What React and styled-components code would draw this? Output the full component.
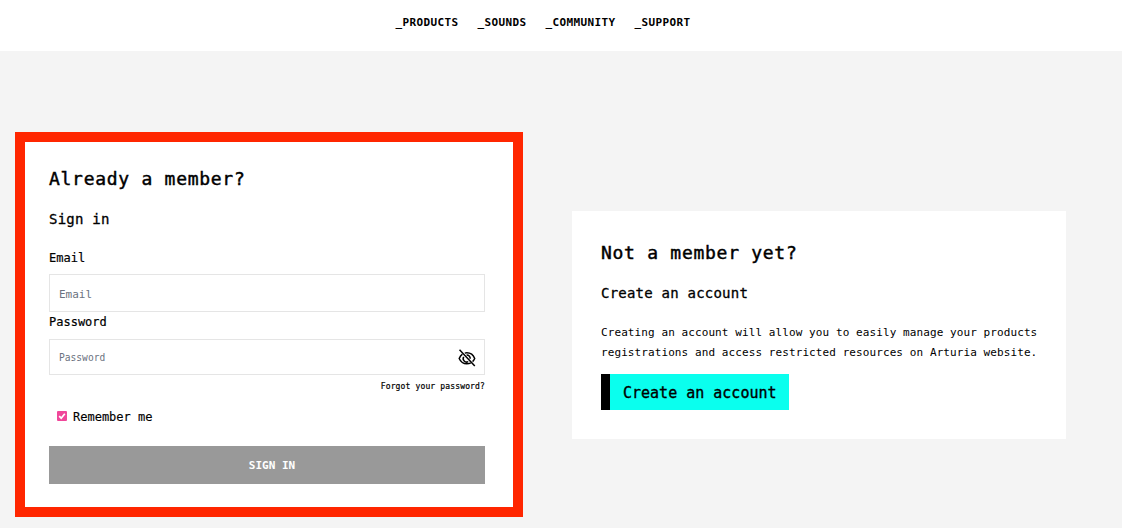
import React from 'react';
import styled, { createGlobalStyle } from 'styled-components';

const mono = `"DejaVu Sans Mono", "Liberation Mono", monospace`;

const GlobalStyle = createGlobalStyle`
  html, body {
    margin: 0;
    padding: 0;
    height: 100%;
    overflow: hidden;
    background: #f4f4f4;
  }
  * {
    box-sizing: border-box;
  }
`;

const Nav = styled.nav`
  height: 51px;
  background: #fff;
  display: flex;
  justify-content: center;
  align-items: center;
  gap: 19px;
  padding: 0 36px 7px 0;
`;

const NavLink = styled.a`
  font-family: ${mono};
  font-size: 11px;
  font-weight: 700;
  letter-spacing: 0.38px;
  color: #000;
  white-space: nowrap;
`;

const Main = styled.main`
  display: flex;
  align-items: center;
  padding: 81px 0 0 15px;
  gap: 49px;
`;

const LoginCard = styled.section`
  width: 508px;
  height: 385px;
  background: #fff;
  border: 10px solid #ff2600;
  padding: 25px 28px 0 24px;
  display: flex;
  flex-direction: column;
`;

const SignupCard = styled.section`
  width: 494px;
  height: 228px;
  background: #fff;
  padding: 30px 28px 0 29px;
  display: flex;
  flex-direction: column;
`;

const Title = styled.h2`
  margin: 0;
  font-family: ${mono};
  font-size: 18px;
  font-weight: 400;
  -webkit-text-stroke: 0.45px #000;
  letter-spacing: 0.72px;
  line-height: 24px;
  color: #000;
`;

const Subtitle = styled.h3`
  margin: 19px 0 0;
  font-family: ${mono};
  font-size: 14px;
  font-weight: 400;
  -webkit-text-stroke: 0.3px #000;
  letter-spacing: 0.22px;
  line-height: 18px;
  color: #000;
`;

const Label = styled.label`
  display: block;
  font-family: ${mono};
  font-size: 12px;
  -webkit-text-stroke: 0.2px #000;
  line-height: 16px;
  color: #000;
  margin-top: ${(p) => p.$top || 0}px;
  margin-bottom: ${(p) => p.$bottom || 0}px;
`;

const InputWrap = styled.div`
  position: relative;
  width: 436px;
`;

const Input = styled.input`
  display: block;
  width: 100%;
  height: ${(p) => p.$height}px;
  padding: ${(p) => p.$pad || 0}px 9px 0;
  border: 1px solid #e5e5e5;
  border-radius: 0;
  outline: none;
  background: #fff;
  font-family: ${mono};
  font-size: ${(p) => p.$size}px;
  color: #000;

  &::placeholder {
    color: #6b7280;
    opacity: 1;
  }
`;

const EyeButton = styled.span`
  position: absolute;
  right: 9px;
  top: 10px;
  width: 18px;
  height: 18px;
  display: flex;
`;

const ForgotRow = styled.div`
  width: 436px;
  margin-top: 6px;
  text-align: right;
  font-family: ${mono};
  font-size: 8px;
  -webkit-text-stroke: 0.2px #000;
  letter-spacing: 0.15px;
  line-height: 11px;
  color: #000;
`;

const RememberRow = styled.label`
  display: flex;
  align-items: center;
  gap: 6px;
  margin: 17px 0 0 8px;
  font-family: ${mono};
  font-size: 12px;
  -webkit-text-stroke: 0.15px #000;
  line-height: 16px;
  color: #000;
`;

const CheckBox = styled.span`
  width: 10px;
  height: 10px;
  border-radius: 1px;
  background: #f0479a;
  display: flex;
  margin-top: -2px;
`;

const SubmitButton = styled.button`
  width: 436px;
  height: 38px;
  margin-top: 21px;
  padding: 0 0 0 10px;
  border: none;
  background: #999;
  color: #fff;
  font-family: ${mono};
  font-size: 11px;
  font-weight: 700;
`;

const Paragraph = styled.p`
  margin: 21px 0 0;
  font-family: ${mono};
  font-size: 11px;
  letter-spacing: 0.09px;
  line-height: 20px;
  color: #000;
  white-space: nowrap;
`;

const CreateButton = styled.a`
  display: block;
  width: 188px;
  height: 36px;
  margin-top: 11px;
  padding-left: 13px;
  background: #0affee;
  border-left: 9px solid #000;
  font-family: ${mono};
  font-size: 15px;
  -webkit-text-stroke: 0.35px #000;
  line-height: 38px;
  color: #000;
  white-space: nowrap;
`;

const EyeOffIcon = () => (
  <svg width="18" height="18" viewBox="0 0 18 18" fill="none" stroke="#000" strokeWidth="1.5">
    <path d="M1.500 0.800 16.800 17" />
    <path d="M4.400 5.200C3 6.200 1.900 7.700 1.200 9.500c1.500 3.400 4.200 5.300 7.600 5.300 1.500 0 2.800-.3 4-1" />
    <path d="M6.800 4.100c.7-.2 1.300-.3 2-.3 3.600 0 6.500 2 7.900 5.700-.5 1.300-1.200 2.300-2.100 3.100" />
    <path d="M5.700 7.900a3.400 3.400 0 0 0 4.600 4.700" />
    <path d="M8.600 6.100a3.400 3.400 0 0 1 3.600 3.600" />
  </svg>
);

const App = () => (
  <>
    <GlobalStyle />
    <Nav>
      <NavLink>_PRODUCTS</NavLink>
      <NavLink>_SOUNDS</NavLink>
      <NavLink>_COMMUNITY</NavLink>
      <NavLink>_SUPPORT</NavLink>
    </Nav>
    <Main>
      <LoginCard>
        <Title>Already a member?</Title>
        <Subtitle>Sign in</Subtitle>
        <Label $top={22} $bottom={8}>Email</Label>
        <InputWrap>
          <Input $height={38} $size={11} $pad={2} placeholder="Email" />
        </InputWrap>
        <Label $top={2} $bottom={9}>Password</Label>
        <InputWrap>
          <Input $height={36} $size={9.6} placeholder="Password" />
          <EyeButton>
            <EyeOffIcon />
          </EyeButton>
        </InputWrap>
        <ForgotRow>Forgot your password?</ForgotRow>
        <RememberRow>
          <CheckBox>
            <svg width="10" height="10" viewBox="0 0 10 10" fill="none" stroke="#fff" strokeWidth="1.7">
              <path d="M2.200 5.200 4.200 7.200 7.800 2.800" />
            </svg>
          </CheckBox>
          Remember me
        </RememberRow>
        <SubmitButton>SIGN IN</SubmitButton>
      </LoginCard>
      <SignupCard>
        <Title>Not a member yet?</Title>
        <Subtitle>Create an account</Subtitle>
        <Paragraph>
          Creating an account will allow you to easily manage your products
          <br />
          registrations and access restricted resources on Arturia website.
        </Paragraph>
        <CreateButton>Create an account</CreateButton>
      </SignupCard>
    </Main>
  </>
);

export default App;
